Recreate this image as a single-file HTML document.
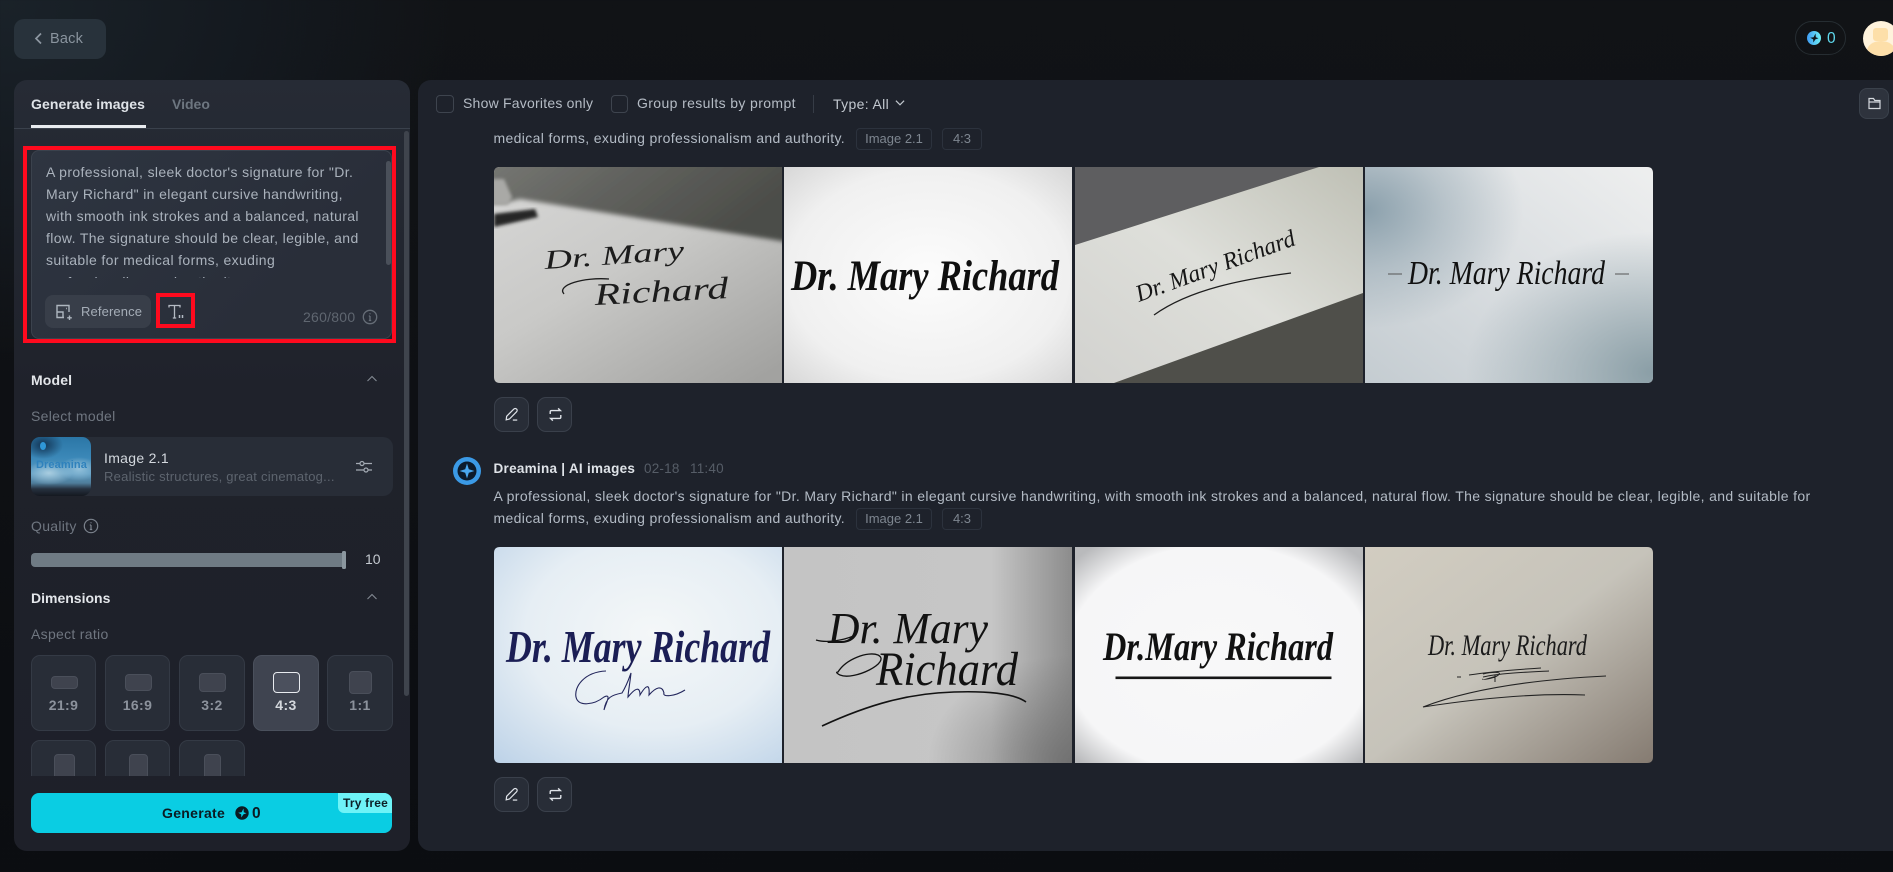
<!DOCTYPE html>
<html lang="en"><head><meta charset="utf-8"><title>Dreamina</title>
<style>
*{box-sizing:border-box}
html,body{margin:0;padding:0}
body{width:1893px;height:872px;overflow:hidden;position:relative;font-family:"Liberation Sans",sans-serif;background:radial-gradient(ellipse 460px 360px at 0 0,#1a2229 0,#14191f 55%,rgba(17,19,22,0) 100%),linear-gradient(#111316,#0b0d11)}
.a,.t{position:absolute}
.t{white-space:nowrap;font-size:14px;line-height:22px;height:22px}
.g{color:#6f7680}.w{color:#e8ebef}.p{color:#b3bbc5;letter-spacing:.353px}
svg{position:absolute;display:block;overflow:visible}
.tile{position:absolute;top:655px;height:76px;border:1px solid #343a45;border-radius:9px;background:#282d37}
.tile.r2{top:740px;height:50px}
.sh{position:absolute;background:#3f434e;border:1px solid #4a4f5a;border-radius:4px}
.lab{position:absolute;width:100%;left:0;top:38px;text-align:center;font-size:14px;line-height:22px;font-weight:700;color:#8c929c;letter-spacing:.4px}
.tag{position:absolute;height:22px;border:1px solid #2c323d;border-radius:4px;font-size:13px;line-height:20px;text-align:center;color:#7e8690}
.btn{position:absolute;width:35px;height:35px;border:1px solid #3a404b;border-radius:9px;background:#282d37}
.img{position:absolute;width:288px;height:216px}
.sig{font-family:"Liberation Serif",serif;font-style:italic}
</style></head><body>

<!-- Top bar -->
<div class="a" style="left:14px;top:19px;width:92px;height:40px;border-radius:10px;background:#28323b"></div>
<svg style="left:32px;top:31px" width="14" height="16" viewBox="0 0 14 16"><path d="M9 2.5 L4 7.5 L9 12.5" fill="none" stroke="#8d97a1" stroke-width="1.7"/></svg>
<div class="t" style="left:50px;top:28px;color:#8a949e;font-size:14.5px;letter-spacing:.2px">Back</div>

<div class="a" style="left:1795px;top:21px;width:51px;height:34px;border:1px solid #262d32;border-radius:17px"></div>
<svg style="left:1807px;top:31px" width="14" height="14" viewBox="0 0 14 14"><defs><linearGradient id="c1" x1="0" x2="1"><stop offset="0" stop-color="#3f9cf5"/><stop offset="1" stop-color="#6ff0f6"/></linearGradient></defs><circle cx="7" cy="7" r="7" fill="url(#c1)"/><path d="M8.5 2.5 L8.8 6.2 L11.5 7.3 L8.4 8.4 L6.3 11.5 L6.2 8.4 L3.2 6.8 L6.6 6.2Z" fill="#10161b"/></svg>
<div class="t" style="left:1827px;top:28px;color:#5fd9ee;font-size:15.5px">0</div>
<div class="a" style="left:1863px;top:21px;width:36px;height:35px;border-radius:50%;background:#fff3dc;overflow:hidden"><div class="a" style="left:10px;top:7px;width:15px;height:13px;background:#fddfa9;border-radius:3px"></div><div class="a" style="left:4px;top:20px;width:28px;height:20px;background:#fddfa9;border-radius:50%"></div></div>

<!-- Left panel -->
<div class="a" style="left:14px;top:80px;width:396px;height:771px;border-radius:13px;background:linear-gradient(180deg,#262b35 0,#1f222b 40%,#1e2029 100%)"></div>
<div class="t w" style="left:31px;top:93px;font-weight:700;color:#dfe3e8;letter-spacing:.08px">Generate images</div>
<div class="t" style="left:172px;top:93px;font-weight:700;color:#6d7680">Video</div>
<div class="a" style="left:14px;top:128px;width:396px;height:1px;background:#3a414c"></div>
<div class="a" style="left:31px;top:125px;width:115px;height:3px;background:#e8ebef"></div>
<div class="a" style="left:404px;top:131px;width:5px;height:565px;background:#3f444d;border-radius:3px"></div>

<!-- Prompt box -->
<div class="a" style="left:31px;top:150px;width:361px;height:189px;border:1px solid #3b424d;border-radius:8px;background:linear-gradient(135deg,#2e3541,#292e39 70%)"></div>
<div class="a" style="left:46px;top:161px;width:335px;height:117px;overflow:hidden;font-size:14px;line-height:22px;color:#aab2bc;letter-spacing:.365px;white-space:nowrap">A professional, sleek doctor's signature for "Dr.<br>Mary Richard" in elegant cursive handwriting,<br>with smooth ink strokes and a balanced, natural<br>flow. The signature should be clear, legible, and<br>suitable for medical forms, exuding<br>professionalism and authority.</div>
<div class="a" style="left:386px;top:161px;width:5px;height:104px;background:#4a505a;border-radius:3px"></div>
<div class="a" style="left:45px;top:295px;width:106px;height:33px;border-radius:8px;background:#383e49"></div>
<svg style="left:55px;top:303px" width="18" height="18" viewBox="0 0 18 18" fill="none" stroke="#aeb6bf" stroke-width="1.4"><path d="M14 9V2.5H2V14.5H9"/><path d="M2 9 L8 9 L8 14.5"/><path d="M11 5.5h.8"/><path d="M14.5 12.5V17M12.2 14.8H16.8"/></svg>
<div class="t" style="left:81px;top:301px;font-size:13px;color:#a5adb7;letter-spacing:.12px">Reference</div>
<svg style="left:168px;top:304px" width="17" height="17" viewBox="0 0 17 17" fill="none" stroke="#b4bbc4" stroke-width="1.3"><path d="M1 3.5V1.5H12V3.5M6.5 1.5V14M4.8 14H8.2"/><path d="M11.5 11v3M14.5 11v3" stroke-width="1.5"/></svg>
<div class="t" style="left:303px;top:306px;font-size:14px;color:#5f6670;letter-spacing:.25px">260/800</div>
<svg style="left:362px;top:309px" width="16" height="16" viewBox="0 0 16 16" fill="none" stroke="#666d77" stroke-width="1.3"><circle cx="8" cy="8" r="6.7"/><path d="M8 7V11.5M6.8 7H8M6.8 11.5H9.2M8 4.3v1"/></svg>
<!-- red annotations -->
<div class="a" style="left:23px;top:146px;width:373px;height:197px;border:4px solid #ff0a1e"></div>
<div class="a" style="left:156px;top:293px;width:39px;height:35px;border:4px solid #ff0a1e"></div>

<!-- Model -->
<div class="t" style="left:31px;top:369px;font-weight:700;color:#e3e6ea;letter-spacing:.15px">Model</div>
<svg style="left:366px;top:374px" width="12" height="9" viewBox="0 0 12 9"><path d="M1.5 7 L6 2.5 L10.5 7" fill="none" stroke="#838a93" stroke-width="1.1"/></svg>
<div class="t g" style="left:31px;top:405px;letter-spacing:.3px">Select model</div>
<div class="a" style="left:31px;top:437px;width:362px;height:59px;border-radius:10px;background:#282d37"></div>
<div class="a" style="left:31px;top:437px;width:60px;height:59px;border-radius:9px;overflow:hidden;background:radial-gradient(ellipse 24px 12px at 18px 36px,#a9cde0 0,rgba(169,205,224,0) 100%),radial-gradient(ellipse 20px 12px at 48px 32px,#93c0da 0,rgba(147,192,218,0) 100%),radial-gradient(ellipse 20px 14px at 12px 8px,#123454 0,rgba(18,52,84,0) 100%),linear-gradient(180deg,#2b76a6 0,#3b88b8 35%,#5a9ac1 62%,#4f7d9b 78%,#26313f 88%,#141820 100%)">
<div class="a" style="left:9px;top:5px;width:6px;height:8px;border-radius:50%;background:#2f97d8"></div>
<div class="a" style="left:5px;top:21px;font-size:11px;line-height:14px;color:#2f82bd;font-weight:700;letter-spacing:.1px">Dreamina</div></div>
<div class="t" style="left:104px;top:447px;color:#d3d8de;letter-spacing:.3px">Image 2.1</div>
<div class="t" style="left:104px;top:466px;font-size:13px;color:#5d646e;letter-spacing:.24px">Realistic structures, great cinematog...</div>
<svg style="left:355px;top:459px" width="18" height="16" viewBox="0 0 18 16" fill="none" stroke="#a3aab3" stroke-width="1.2"><path d="M1 4.5H5M9 4.5H17M1 11H9M13 11H17"/><circle cx="7" cy="4.5" r="2"/><circle cx="11" cy="11" r="2"/></svg>
<div class="t g" style="left:31px;top:515px;letter-spacing:.3px">Quality</div>
<svg style="left:83px;top:518px" width="16" height="16" viewBox="0 0 16 16" fill="none" stroke="#7b828c" stroke-width="1.2"><circle cx="8" cy="8" r="6.7"/><path d="M8 7V11.5M6.8 7H8M6.8 11.5H9.2M8 4.3v1"/></svg>
<div class="a" style="left:31px;top:553px;width:315px;height:14px;border-radius:4px;background:#6f7b84"></div>
<div class="a" style="left:342px;top:551px;width:4px;height:18px;border-radius:1.5px;background:#8b979f"></div>
<div class="t" style="left:365px;top:548px;color:#c5cad0">10</div>
<div class="t" style="left:31px;top:587px;font-weight:700;color:#e3e6ea">Dimensions</div>
<svg style="left:366px;top:592px" width="12" height="9" viewBox="0 0 12 9"><path d="M1.5 7 L6 2.5 L10.5 7" fill="none" stroke="#838a93" stroke-width="1.1"/></svg>
<div class="t g" style="left:31px;top:623px;letter-spacing:.3px">Aspect ratio</div>

<div class="tile" style="left:31px;width:65px"><div class="sh" style="left:19px;top:20px;width:27px;height:13px"></div><div class="lab">21:9</div></div>
<div class="tile" style="left:105px;width:65px"><div class="sh" style="left:19px;top:18px;width:27px;height:17px"></div><div class="lab">16:9</div></div>
<div class="tile" style="left:179px;width:66px"><div class="sh" style="left:19px;top:17px;width:27px;height:19px"></div><div class="lab">3:2</div></div>
<div class="tile" style="left:253px;width:66px;background:#3f4450;border-color:#4a505c"><div class="sh" style="left:19px;top:16px;width:27px;height:21px;background:#4b505d;border-color:#e8ebef"></div><div class="lab" style="color:#d4d8dd">4:3</div></div>
<div class="tile" style="left:327px;width:66px"><div class="sh" style="left:21px;top:15px;width:23px;height:23px"></div><div class="lab">1:1</div></div>
<div class="a" style="left:31px;top:740px;width:362px;height:36px;overflow:hidden">
<div class="tile r2" style="left:0;top:0;width:65px"><div class="sh" style="left:22px;top:13px;width:21px;height:40px"></div></div>
<div class="tile r2" style="left:74px;top:0;width:65px"><div class="sh" style="left:23px;top:13px;width:19px;height:40px"></div></div>
<div class="tile r2" style="left:148px;top:0;width:66px"><div class="sh" style="left:24px;top:13px;width:17px;height:40px"></div></div>
</div>
<div class="a" style="left:31px;top:793px;width:361px;height:40px;border-radius:8px;background:#0acde3"></div>
<div class="a" style="left:338px;top:793px;width:54px;height:20px;border-radius:0 8px 0 6px;background:#6ef3f7"></div>
<div class="t" style="left:343px;top:792px;font-size:12px;font-weight:700;color:#0c2026;letter-spacing:.2px">Try free</div>
<div class="t" style="left:162px;top:802px;font-weight:700;color:#0b1a22;letter-spacing:.3px">Generate</div>
<svg style="left:235px;top:806px" width="14" height="14" viewBox="0 0 14 14"><circle cx="7" cy="7" r="6.7" fill="#0b1a22"/><path d="M8.5 2.5 L8.8 6.2 L11.5 7.3 L8.4 8.4 L6.3 11.5 L6.2 8.4 L3.2 6.8 L6.6 6.2Z" fill="#0acde3"/></svg>
<div class="t" style="left:252px;top:803px;font-weight:700;color:#0b1a22;font-size:15.5px">0</div>

<!-- Main panel -->
<div class="a" style="left:418px;top:80px;width:1480px;height:771px;border-radius:13px 0 0 13px;background:#1e222b"></div>
<div class="a" style="left:436px;top:95px;width:18px;height:18px;border:1px solid #3e444e;border-radius:4px"></div>
<div class="t" style="left:463px;top:92px;color:#b5bcc5;letter-spacing:.22px">Show Favorites only</div>
<div class="a" style="left:611px;top:95px;width:17px;height:18px;border:1px solid #3e444e;border-radius:4px"></div>
<div class="t" style="left:637px;top:92px;color:#b5bcc5;letter-spacing:.38px">Group results by prompt</div>
<div class="a" style="left:813px;top:95px;width:1px;height:18px;background:#363c46"></div>
<div class="t" style="left:833px;top:93px;color:#c2c8cf;letter-spacing:.35px">Type: All</div>
<svg style="left:895px;top:99px" width="10" height="8" viewBox="0 0 11 8"><path d="M1 1.5 L5.5 6 L10 1.5" fill="none" stroke="#c2c8cf" stroke-width="1.3"/></svg>
<div class="a" style="left:1859px;top:88px;width:30px;height:31px;border:1px solid #3a414b;border-radius:8px;background:#2e333d"></div>
<svg style="left:1868px;top:97px" width="13" height="13" viewBox="0 0 13 13" fill="none" stroke="#d5d9de" stroke-width="1.2"><path d="M1 11.5V1.5H5.5L6.8 3.5H12V11.5Z"/><path d="M1 5H12"/></svg>

<!-- Group 1 -->
<div class="t p" style="left:493.5px;top:127px">medical forms, exuding professionalism and authority.</div>
<div class="tag" style="left:856px;top:128px;width:76px">Image 2.1</div>
<div class="tag" style="left:942px;top:128px;width:40px">4:3</div>

<svg class="img" style="left:493.5px;top:167px" viewBox="0 0 288 216">
<defs>
<clipPath id="cl"><path d="M6 0H288V216H6Q0 216 0 210V6Q0 0 6 0Z"/></clipPath>
<clipPath id="cr"><path d="M0 0H282Q288 0 288 6V210Q288 216 282 216H0Z"/></clipPath>
<linearGradient id="a1" x1=".1" y1="0" x2=".9" y2="1"><stop offset="0" stop-color="#d6d6d5"/><stop offset=".45" stop-color="#c9c9c7"/><stop offset="1" stop-color="#a2a2a0"/></linearGradient>
<linearGradient id="a1t" x1="0" y1="0" x2="1" y2=".35"><stop offset="0" stop-color="#767773"/><stop offset=".5" stop-color="#5f605c"/><stop offset="1" stop-color="#4c4d49"/></linearGradient>
<radialGradient id="a2" cx=".5" cy=".5" r=".75"><stop offset="0" stop-color="#fcfcfc"/><stop offset=".65" stop-color="#f0f0f0"/><stop offset="1" stop-color="#d2d2d2"/></radialGradient>
<linearGradient id="a3" x1="0" y1="1" x2="1" y2="0"><stop offset="0" stop-color="#d2d2cf"/><stop offset=".5" stop-color="#dedfda"/><stop offset="1" stop-color="#bfc0b5"/></linearGradient>
<linearGradient id="a4b" x1="0" y1="1" x2="1" y2="0"><stop offset="0" stop-color="#c4ccd1"/><stop offset=".5" stop-color="#dadee1"/><stop offset="1" stop-color="#eeefef"/></linearGradient>
<radialGradient id="a4d1" cx="0" cy=".2" r=".55"><stop offset="0" stop-color="#8ba0ac"/><stop offset=".5" stop-color="#8ba0ac" stop-opacity=".45"/><stop offset="1" stop-color="#8ba0ac" stop-opacity="0"/></radialGradient>
<radialGradient id="a4d2" cx="1" cy=".95" r=".65"><stop offset="0" stop-color="#8a9ea6"/><stop offset=".5" stop-color="#8a9ea6" stop-opacity=".5"/><stop offset="1" stop-color="#8a9ea6" stop-opacity="0"/></radialGradient>
<filter id="b1" x="-10%" y="-10%" width="120%" height="120%"><feGaussianBlur stdDeviation="2.5"/></filter>
<filter id="b2" x="-10%" y="-10%" width="120%" height="120%"><feGaussianBlur stdDeviation="1.6"/></filter>
</defs>
<g clip-path="url(#cl)">
<rect width="288" height="216" fill="url(#a1)"/>
<path d="M-5 -5H293V75L26 32L10 36H-5Z" fill="url(#a1t)" filter="url(#b1)"/>
<path d="M-2 12H10L18 30L14 38H-2Z" fill="#a9a9a6" filter="url(#b2)"/>
<path d="M0 47L41 42L44 50L0 60Z" fill="#252625" filter="url(#b2)"/>
<text class="sig" font-size="27" fill="#1c1c1c" transform="rotate(-4 51 102)"><tspan x="51" y="102" textLength="140" lengthAdjust="spacingAndGlyphs">Dr. Mary</tspan></text>
<text class="sig" font-size="31" fill="#1c1c1c" transform="rotate(-3 101 138)"><tspan x="101" y="138" textLength="134" lengthAdjust="spacingAndGlyphs">Richard</tspan></text>
<path d="M70 127C62 118 90 110 115 112" fill="none" stroke="#1c1c1c" stroke-width="1.3"/>
</g></svg>

<svg class="img" style="left:783.8px;top:167px" viewBox="0 0 288 216">
<rect width="288" height="216" fill="url(#a2)"/>
<text class="sig" font-weight="700" font-size="43" fill="#0f0f0f" x="7" y="123" textLength="268" lengthAdjust="spacingAndGlyphs">Dr. Mary Richard</text>
</svg>

<svg class="img" style="left:1074.5px;top:167px" viewBox="0 0 288 216">
<rect width="288" height="216" fill="#4f4f4a"/><path d="M0 0H244L0 78Z" fill="#5e5e60"/>
<path d="M0 78L244 0H288V126L39 216H0Z" fill="url(#a3)"/>
<text class="sig" font-size="24" fill="#161616" transform="rotate(-20 64 135)"><tspan x="64" y="135" textLength="168" lengthAdjust="spacingAndGlyphs">Dr. Mary Richard</tspan></text>
<path d="M79 148C115 122 170 112 216 106" fill="none" stroke="#1e1e1e" stroke-width="1.3"/>
</svg>

<svg class="img" style="left:1364.6px;top:167px" viewBox="0 0 288 216">
<g clip-path="url(#cr)"><rect width="288" height="216" fill="url(#a4b)"/>
<rect width="288" height="216" fill="url(#a4d1)"/><rect width="288" height="216" fill="url(#a4d2)"/>
<text class="sig" font-size="34" fill="#111" x="43" y="117" textLength="197" lengthAdjust="spacingAndGlyphs">Dr. Mary Richard</text>
<path d="M23 107H37M250 107H264" stroke="#555" stroke-width="1"/></g>
</svg>

<div class="btn" style="left:494px;top:397px"></div><div class="btn" style="left:537px;top:397px"></div>
<svg style="left:504px;top:407px" width="15" height="15" viewBox="0 0 17 17" fill="none" stroke="#dfe3e8" stroke-width="1.4"><path d="M2.5 14.5L3 10.5L11 2.5C12 1.5 13.5 1.5 14.3 2.4C15.2 3.3 15 4.6 14.2 5.4L6.2 13.6Z"/><path d="M10 14.8H15"/></svg>
<svg style="left:548px;top:407px" width="15" height="15" viewBox="0 0 17 17" fill="none" stroke="#dfe3e8" stroke-width="1.6"><path d="M2.5 8V5.5C2.5 4.5 3.2 4 4 4H14L11.5 1.5M14.5 9V11.5C14.5 12.5 13.8 13 13 13H3L5.5 15.5"/></svg>

<!-- Group 2 -->
<svg style="left:453px;top:457px" width="28" height="28" viewBox="0 0 28 28"><circle cx="14" cy="14" r="14" fill="#3b9ae6"/><circle cx="14" cy="14" r="9.5" fill="#0c1b2c"/><path d="M14 6.5L15.8 12.2L21.5 14L15.8 15.8L14 21.5L12.2 15.8L6.5 14L12.2 12.2Z" fill="#4aa8f0"/></svg>
<div class="t w" style="left:493.5px;top:458px;font-weight:700;font-size:13.5px;color:#dfe3e8;letter-spacing:.28px">Dreamina | AI images</div>
<div class="t" style="left:644px;top:458px;color:#565d67;font-size:13.5px;letter-spacing:.2px">02-18</div>
<div class="t" style="left:690px;top:458px;color:#565d67;font-size:13.5px;letter-spacing:.2px">11:40</div>
<div class="t p" style="left:493.5px;top:485px">A professional, sleek doctor's signature for "Dr. Mary Richard" in elegant cursive handwriting, with smooth ink strokes and a balanced, natural flow. The signature should be clear, legible, and suitable for</div>
<div class="t p" style="left:493.5px;top:507px">medical forms, exuding professionalism and authority.</div>
<div class="tag" style="left:856px;top:508px;width:76px">Image 2.1</div>
<div class="tag" style="left:942px;top:508px;width:40px">4:3</div>

<svg class="img" style="left:493.5px;top:547px" viewBox="0 0 288 216">
<defs>
<radialGradient id="b1g" cx=".55" cy=".4" r=".8"><stop offset="0" stop-color="#f4f7f8"/><stop offset=".55" stop-color="#e6eef4"/><stop offset="1" stop-color="#bed3e8"/></radialGradient>
<linearGradient id="b2g" x1="0" y1="0" x2="1" y2="0"><stop offset="0" stop-color="#c4c4c4"/><stop offset=".72" stop-color="#c6c6c6"/><stop offset="1" stop-color="#8c8c8c"/></linearGradient>
<radialGradient id="b2d" cx="1" cy="1" r=".5"><stop offset="0" stop-color="#6a6a6a" stop-opacity=".8"/><stop offset="1" stop-color="#6a6a6a" stop-opacity="0"/></radialGradient>
<radialGradient id="b3g" cx=".5" cy=".52" r=".68"><stop offset="0" stop-color="#f8f8f9"/><stop offset=".78" stop-color="#f6f6f7"/><stop offset="1" stop-color="#b9babc"/></radialGradient>
<linearGradient id="b4g" x1="0" y1="0" x2="1" y2="1"><stop offset="0" stop-color="#d2cdc1"/><stop offset=".5" stop-color="#c6c3ba"/><stop offset="1" stop-color="#857b71"/></linearGradient>
</defs>
<g clip-path="url(#cl)"><rect width="288" height="216" fill="url(#b1g)"/>
<text class="sig" font-weight="700" font-size="46" fill="#1b1e55" x="12" y="115" textLength="264" lengthAdjust="spacingAndGlyphs">Dr. Mary Richard</text>
<path d="M112 124C90 125 80 140 82 150C84 160 100 158 110 150C118 146 112 156 110 163C112 150 118 148 128 146C134 136 136 128 137 126C136 136 134 146 134 150C142 140 146 140 146 148C152 138 156 136 155 148C162 140 168 138 170 146C168 150 180 150 191 143" fill="none" stroke="#23265c" stroke-width="1.1"/>
</g></svg>

<svg class="img" style="left:783.8px;top:547px" viewBox="0 0 288 216">
<rect width="288" height="216" fill="url(#b2g)"/><rect width="288" height="216" fill="url(#b2d)"/>
<text class="sig" font-size="44" fill="#121212" x="44" y="96" textLength="160" lengthAdjust="spacingAndGlyphs">Dr. Mary</text>
<text class="sig" font-size="48" fill="#121212" x="92" y="138" textLength="142" lengthAdjust="spacingAndGlyphs">Richard</text>
<path d="M32 93C42 96 58 94 72 88M54 125C62 112 84 104 94 108C108 115 70 134 56 128C52 126 52 125 54 125Z" fill="none" stroke="#121212" stroke-width="1.3"/>
<path d="M38 179C90 155 130 146 170 145C200 144 230 146 242 155" fill="none" stroke="#121212" stroke-width="1.6"/>
</svg>

<svg class="img" style="left:1074.5px;top:547px" viewBox="0 0 288 216">
<rect width="288" height="216" fill="url(#b3g)"/>
<text class="sig" font-weight="700" font-size="40" fill="#111" x="28" y="113" textLength="230" lengthAdjust="spacingAndGlyphs">Dr.Mary Richard</text>
<rect x="40.5" y="129.5" width="216" height="2.6" fill="#171717"/>
</svg>

<svg class="img" style="left:1364.6px;top:547px" viewBox="0 0 288 216">
<g clip-path="url(#cr)"><rect width="288" height="216" fill="url(#b4g)"/>
<text class="sig" font-size="30" fill="#1b1b1b" x="63" y="108" textLength="159" lengthAdjust="spacingAndGlyphs">Dr. Mary Richard</text>
<path d="M92 130H96M104 128C130 124 160 122 176 121M118 130C135 126 165 125 184 124M118 127C126 125 140 124 132 129C126 132 116 133 118 132M130 128L130 135" fill="none" stroke="#232323" stroke-width="1"/>
<path d="M58 160C110 140 180 132 241 129M58 160C110 152 170 146 220 148" fill="none" stroke="#232323" stroke-width="1.1"/></g>
</svg>

<div class="btn" style="left:494px;top:777px"></div><div class="btn" style="left:537px;top:777px"></div>
<svg style="left:504px;top:787px" width="15" height="15" viewBox="0 0 17 17" fill="none" stroke="#dfe3e8" stroke-width="1.4"><path d="M2.5 14.5L3 10.5L11 2.5C12 1.5 13.5 1.5 14.3 2.4C15.2 3.3 15 4.6 14.2 5.4L6.2 13.6Z"/><path d="M10 14.8H15"/></svg>
<svg style="left:548px;top:787px" width="15" height="15" viewBox="0 0 17 17" fill="none" stroke="#dfe3e8" stroke-width="1.6"><path d="M2.5 8V5.5C2.5 4.5 3.2 4 4 4H14L11.5 1.5M14.5 9V11.5C14.5 12.5 13.8 13 13 13H3L5.5 15.5"/></svg>

</body></html>
